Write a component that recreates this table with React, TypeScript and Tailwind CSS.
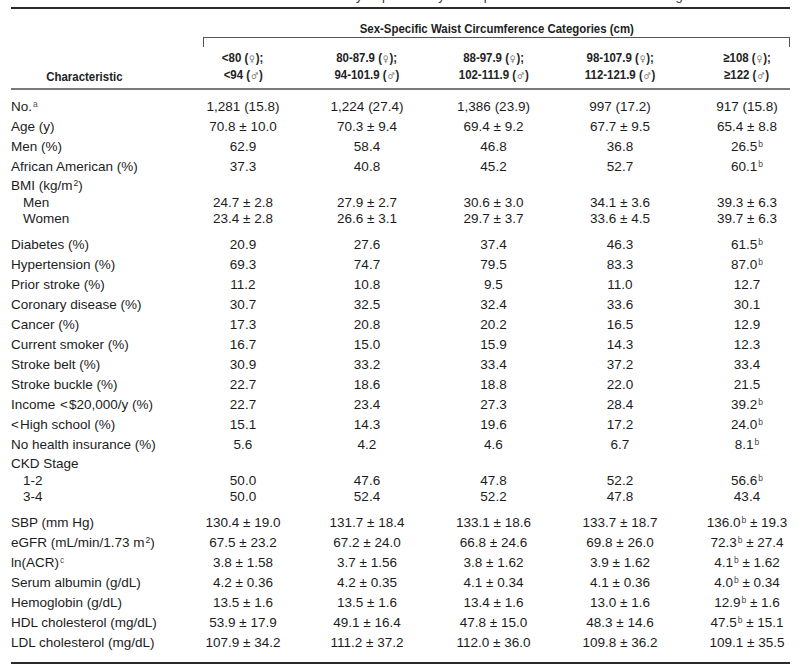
import React from "react";

type Row =
  | { kind: "main" | "group" | "sub"; label: React.ReactNode; vals?: string[] }
  | { kind: "spacer" };

const rows: Row[] = [
  { kind: "main", label: <>No.<sup className="text-[8.5px] text-[#555] ml-[1px]">a</sup></>, vals: ["1,281 (15.8)", "1,224 (27.4)", "1,386 (23.9)", "997 (17.2)", "917 (15.8)"] },
  { kind: "main", label: "Age (y)", vals: ["70.8 ± 10.0", "70.3 ± 9.4", "69.4 ± 9.2", "67.7 ± 9.5", "65.4 ± 8.8"] },
  { kind: "main", label: "Men (%)", vals: ["62.9", "58.4", "46.8", "36.8", "26.5^b"] },
  { kind: "main", label: "African American (%)", vals: ["37.3", "40.8", "45.2", "52.7", "60.1^b"] },
  { kind: "group", label: <>BMI (kg/m<sup className="text-[8.5px] ml-[1px]">2</sup>)</> },
  { kind: "sub", label: "Men", vals: ["24.7 ± 2.8", "27.9 ± 2.7", "30.6 ± 3.0", "34.1 ± 3.6", "39.3 ± 6.3"] },
  { kind: "sub", label: "Women", vals: ["23.4 ± 2.8", "26.6 ± 3.1", "29.7 ± 3.7", "33.6 ± 4.5", "39.7 ± 6.3"] },
  { kind: "spacer" },
  { kind: "main", label: "Diabetes (%)", vals: ["20.9", "27.6", "37.4", "46.3", "61.5^b"] },
  { kind: "main", label: "Hypertension (%)", vals: ["69.3", "74.7", "79.5", "83.3", "87.0^b"] },
  { kind: "main", label: "Prior stroke (%)", vals: ["11.2", "10.8", "9.5", "11.0", "12.7"] },
  { kind: "main", label: "Coronary disease (%)", vals: ["30.7", "32.5", "32.4", "33.6", "30.1"] },
  { kind: "main", label: "Cancer (%)", vals: ["17.3", "20.8", "20.2", "16.5", "12.9"] },
  { kind: "main", label: "Current smoker (%)", vals: ["16.7", "15.0", "15.9", "14.3", "12.3"] },
  { kind: "main", label: "Stroke belt (%)", vals: ["30.9", "33.2", "33.4", "37.2", "33.4"] },
  { kind: "main", label: "Stroke buckle (%)", vals: ["22.7", "18.6", "18.8", "22.0", "21.5"] },
  { kind: "main", label: <>Income <span className="mx-[1px]">&lt;</span>$20,000/y (%)</>, vals: ["22.7", "23.4", "27.3", "28.4", "39.2^b"] },
  { kind: "main", label: <><span className="mr-[1px]">&lt;</span>High school (%)</>, vals: ["15.1", "14.3", "19.6", "17.2", "24.0^b"] },
  { kind: "main", label: "No health insurance (%)", vals: ["5.6", "4.2", "4.6", "6.7", "8.1^b"] },
  { kind: "group", label: "CKD Stage" },
  { kind: "sub", label: "1-2", vals: ["50.0", "47.6", "47.8", "52.2", "56.6^b"] },
  { kind: "sub", label: "3-4", vals: ["50.0", "52.4", "52.2", "47.8", "43.4"] },
  { kind: "spacer" },
  { kind: "main", label: "SBP (mm Hg)", vals: ["130.4 ± 19.0", "131.7 ± 18.4", "133.1 ± 18.6", "133.7 ± 18.7", "136.0^b ± 19.3"] },
  { kind: "main", label: <>eGFR (mL/min/1.73 m<sup className="text-[8.5px] ml-[1px]">2</sup>)</>, vals: ["67.5 ± 23.2", "67.2 ± 24.0", "66.8 ± 24.6", "69.8 ± 26.0", "72.3^b ± 27.4"] },
  { kind: "main", label: <>ln(ACR)<sup className="text-[8.5px] text-[#555] ml-[1px]">c</sup></>, vals: ["3.8 ± 1.58", "3.7 ± 1.56", "3.8 ± 1.62", "3.9 ± 1.62", "4.1^b ± 1.62"] },
  { kind: "main", label: "Serum albumin (g/dL)", vals: ["4.2 ± 0.36", "4.2 ± 0.35", "4.1 ± 0.34", "4.1 ± 0.36", "4.0^b ± 0.34"] },
  { kind: "main", label: "Hemoglobin (g/dL)", vals: ["13.5 ± 1.6", "13.5 ± 1.6", "13.4 ± 1.6", "13.0 ± 1.6", "12.9^b ± 1.6"] },
  { kind: "main", label: "HDL cholesterol (mg/dL)", vals: ["53.9 ± 17.9", "49.1 ± 16.4", "47.8 ± 15.0", "48.3 ± 14.6", "47.5^b ± 15.1"] },
  { kind: "main", label: "LDL cholesterol (mg/dL)", vals: ["107.9 ± 34.2", "111.2 ± 37.2", "112.0 ± 36.0", "109.8 ± 36.2", "109.1 ± 35.5"] },
];

function Val({ s }: { s: string }) {
  const parts = s.split(/\^(\w)/);
  return (
    <>
      {parts.map((p, i) =>
        i % 2 === 1 ? (
          <sup key={i} className="text-[8.5px] text-[#444] ml-[1px]">
            {p}
          </sup>
        ) : (
          <span key={i}>{p}</span>
        )
      )}
    </>
  );
}

const GRID = "grid grid-cols-[171px_122px_126px_127px_126px_107px] items-center";

function Sym({ c }: { c: string }) {
  return (
    <span className="font-['DejaVu_Sans',sans-serif] font-normal text-[9px] text-[#777] mx-[1px]">{c}</span>
  );
}

function Narrow({ children }: { children: React.ReactNode }) {
  return <span className="inline-block scale-x-[0.88] origin-center whitespace-nowrap">{children}</span>;
}

const headers: [React.ReactNode, React.ReactNode][] = [
  [<>&lt;80 (<Sym c="♀" />);</>, <>&lt;94 (<Sym c="♂" />)</>],
  [<>80-87.9 (<Sym c="♀" />);</>, <>94-101.9 (<Sym c="♂" />)</>],
  [<>88-97.9 (<Sym c="♀" />);</>, <>102-111.9 (<Sym c="♂" />)</>],
  [<>98-107.9 (<Sym c="♀" />);</>, <>112-121.9 (<Sym c="♂" />)</>],
  [<>≥108 (<Sym c="♀" />);</>, <>≥122 (<Sym c="♂" />)</>],
];

export default function App() {
  return (
    <div className="w-[805px] h-[670px] bg-white overflow-hidden text-[#1c1c1c] font-['Liberation_Sans',Arial,sans-serif]">
      {/* cut-off caption descenders */}
      <div className="h-[4px] overflow-hidden">
        <div className="-mt-[11px] leading-[14px] text-[13px] whitespace-nowrap pl-[150px] text-[#333]">
          Baseline Characteristics of the Study Population by Sex-Specific Waist Circumference Categories
        </div>
      </div>
      <div className="ml-[11px] w-[779px]">
        <div className="mt-[3px] h-[1.5px] bg-[#2a2a2a]" />
        <div className="font-bold text-[13px] text-[#222]">
          <div className="mt-[12.5px] leading-[16px] ml-[192px] text-center">
            <Narrow>Sex-Specific Waist Circumference Categories (cm)</Narrow>
          </div>
          <div className="ml-[192px] h-[10px] border-t border-l border-r border-[#555]" />
          <div className={`${GRID} mt-[2.5px] leading-[15px]`}>
            <div className="self-end pr-[25px] text-center">
              <Narrow>Characteristic</Narrow>
            </div>
            {headers.map((h, i) => (
              <div key={i} className={`text-center ${i === 4 ? "pl-[21px]" : ""}`}>
                <div>
                  <Narrow>{h[0]}</Narrow>
                </div>
                <div>
                  <Narrow>{h[1]}</Narrow>
                </div>
              </div>
            ))}
          </div>
        </div>
        <div className="mt-[4.5px] h-[2px] bg-[#7a7a7a]" />
        <div className="pt-[7px] text-[13.5px]">
          {rows.map((r, idx) => {
            if (r.kind === "spacer") return <div key={idx} className="h-[8px]" />;
            const h = r.kind === "main" ? "h-[20px]" : r.kind === "group" ? "h-[18px]" : "h-[16px]";
            return (
              <div key={idx} className={`${GRID} ${h} leading-[16px] whitespace-nowrap`}>
                <div className={r.kind === "sub" ? "pl-[12px]" : ""}>{r.label}</div>
                {(r.vals ?? ["", "", "", "", ""]).map((v, i) => (
                  <div key={i} className={`text-center ${i === 4 ? "pl-[21px]" : ""}`}>
                    <Val s={v} />
                  </div>
                ))}
              </div>
            );
          })}
        </div>
        <div className="mt-[9px] h-[1.5px] bg-[#2a2a2a]" />
      </div>
    </div>
  );
}
